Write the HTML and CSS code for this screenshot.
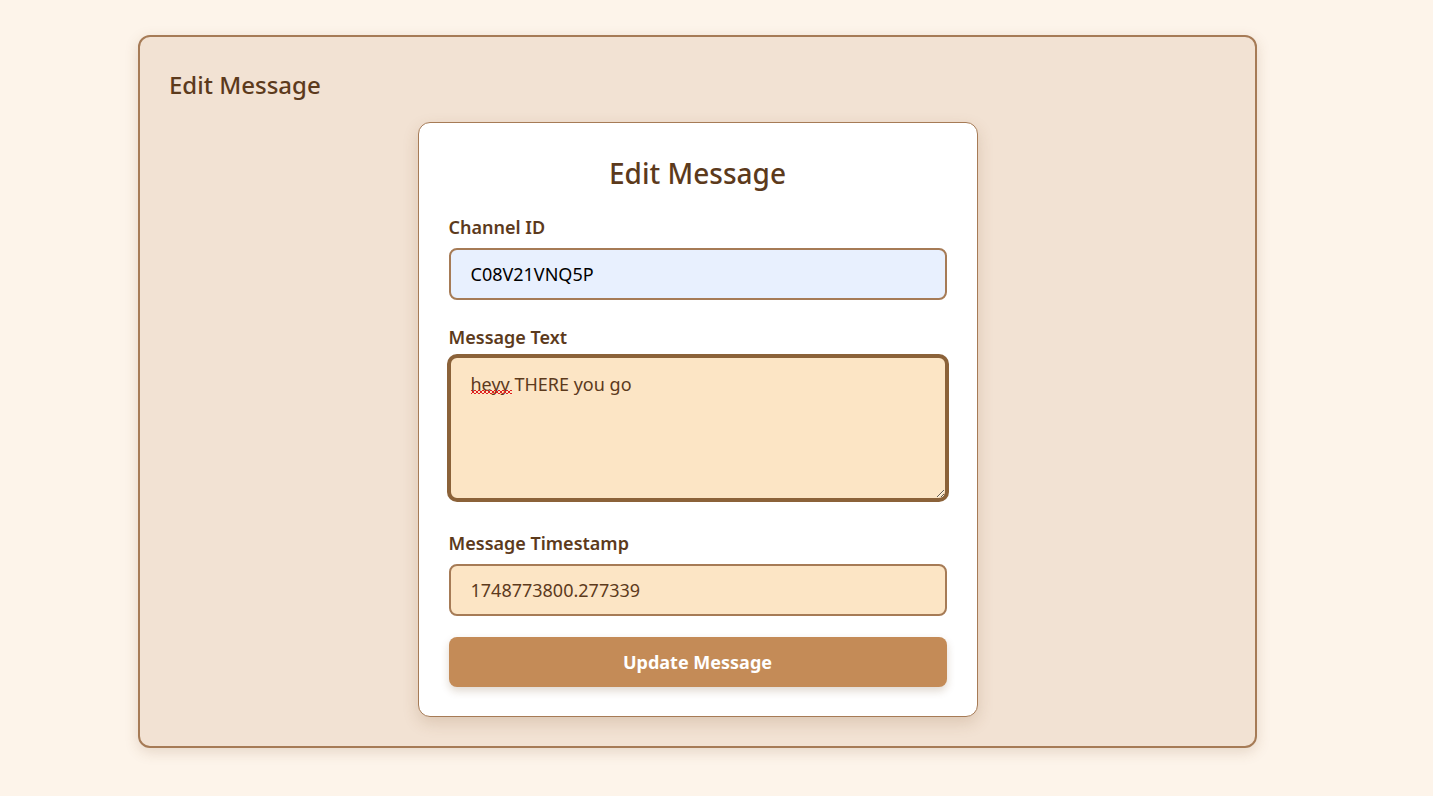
FILE: index.html
```html
<!DOCTYPE html>
<html lang="en">
<head>
<meta charset="utf-8">
<title>Edit Message</title>
<link rel="stylesheet" href="styles.css">
</head>
<body>
<div class="page">
  <section class="panel">
    <h2 class="panel-title">Edit Message</h2>
    <form class="form-card">
      <h1 class="form-title">Edit Message</h1>
      <div class="field">
        <label class="label" for="channel">Channel ID</label>
        <input class="input input-autofill" id="channel" type="text" value="C08V21VNQ5P">
      </div>
      <div class="field field-textarea">
        <label class="label" for="text">Message Text</label>
        <textarea class="input textarea" id="text" spellcheck="false">heyy THERE you go</textarea>
        <span class="squiggle"></span>
      </div>
      <div class="field field-last">
        <label class="label" for="ts">Message Timestamp</label>
        <input class="input" id="ts" type="text" value="1748773800.277339">
      </div>
      <button class="btn" type="button">Update Message</button>
    </form>
  </section>
</div>
</body>
</html>
```

FILE: styles.css
```css
* { box-sizing: border-box; }
html, body { margin: 0; padding: 0; }
body {
  background: #fdf4ea;
  font-family: "Noto Sans", "Open Sans", sans-serif;
  color: #5c3a1c;
  width: 1433px;
  height: 796px;
  overflow: hidden;
}
.page {
  padding: 35px 0 0 138px;
}
.panel {
  width: 1119px;
  height: 713px;
  background: #f2e2d3;
  border: 2px solid #a67b56;
  border-radius: 12px;
  padding: 30px;
  box-shadow: 0 4px 14px rgba(120, 80, 40, 0.18);
}
.panel-title {
  margin: 0 0 19px -1px;
  font-size: 24px;
  line-height: 36px;
  font-weight: 500;
  color: #5c3a1c;
}
.form-card {
  width: 560px;
  margin: 0 auto;
  background: #ffffff;
  border: 1px solid #a67b56;
  border-radius: 12px;
  padding: 29px 30px;
  box-shadow: 0 6px 16px rgba(120, 80, 40, 0.18);
}
.form-title {
  margin: 0 0 20px 0;
  text-align: center;
  font-size: 28px;
  line-height: 42px;
  font-weight: 500;
  color: #5c3a1c;
}
.field {
  position: relative;
  margin-bottom: 24px;
}
.field-textarea {
  margin-bottom: 30px;
}
.field-last {
  margin-bottom: 21px;
}
.label {
  display: block;
  font-size: 18px;
  line-height: 27px;
  font-weight: 600;
  color: #5c3a1c;
  margin-bottom: 7px;
}
.input {
  display: block;
  width: 100%;
  height: 52px;
  padding: 0 20px;
  font-family: inherit;
  font-size: 18px;
  color: #5c3a1c;
  background: #fce5c5;
  border: 2px solid #a67b56;
  border-radius: 8px;
  outline: none;
}
.input-autofill {
  background: #e8f0fe;
  color: #000000;
}
.textarea {
  height: 144px;
  margin: -2px 0 0 0;
  padding: 13px 20px;
  line-height: 27px;
  resize: vertical;
  border-color: #8b6239;
  box-shadow: 0 0 0 2px #8b6239;
}
.squiggle {
  position: absolute;
  left: 22px;
  top: 66px;
  width: 41px;
  height: 4px;
  background-image: linear-gradient(135deg, transparent 45%, #e02020 45%, #e02020 60%, transparent 60%),
                    linear-gradient(45deg, transparent 45%, #e02020 45%, #e02020 60%, transparent 60%);
  background-size: 4px 4px;
  background-repeat: repeat-x;
}
.btn {
  display: block;
  width: 100%;
  height: 50px;
  margin: 0;
  border: none;
  border-radius: 8px;
  background: #c48b57;
  color: #ffffff;
  font-family: inherit;
  font-size: 18px;
  font-weight: 700;
  box-shadow: 0 4px 8px rgba(100, 60, 20, 0.2);
  cursor: pointer;
}
```
